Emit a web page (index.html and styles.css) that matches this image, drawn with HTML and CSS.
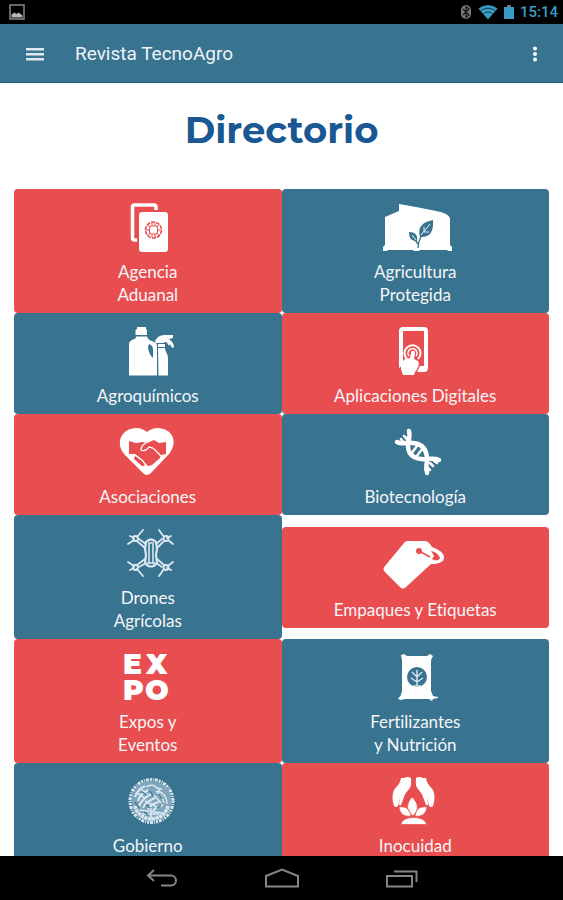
FILE: index.html
```
<!DOCTYPE html>
<html lang="es">
<head>
	<meta charset="UTF-8">
	<title>Revista TecnoAgro</title>
	<meta name="viewport" content="width=device-width,initial-scale=1">
	<link rel="stylesheet" href="styles.css">
</head>
<body>
	<!-- Status bar -->
	<div class="statusbar">
		<svg class="shot" width="16" height="16" viewBox="0 0 16 16">
			<rect x="1" y="1" width="14" height="14" fill="none" stroke="#8a8a8a" stroke-width="1.5"/>
			<path d="M2.500 13.500v-3l3-2 2 1.500 2-1.500 4 3v2z" fill="#b5b5b5"/>
		</svg>
		<div class="status-icons">
			<svg width="12" height="16" viewBox="0 0 12 16">
				<rect x="1" y="1" width="10" height="14" rx="5" fill="#777"/>
				<path d="M3 5l6 6-3 2.500v-11L9 5l-6 6" fill="none" stroke="#161616" stroke-width="1.200"/>
			</svg>
			<svg width="20" height="16" viewBox="0 0 20 16">
				<path d="M0.500 4.500C6 0 14 0 19.500 4.500L10 15.500z" fill="#3a9cc6"/>
				<path d="M3 6.500c4-3 10-3 14 0M5.500 9.500c3-2 6-2 9 0" fill="none" stroke="#123c50" stroke-width="1"/>
			</svg>
			<svg width="10" height="16" viewBox="0 0 10 16">
				<rect x="3" y="1" width="4" height="2" fill="#777"/>
				<rect x="0" y="3" width="10" height="12" fill="#3a9cc6"/>
			</svg>
			<span class="clock">15:14</span>
		</div>
	</div>

	<!-- App bar -->
	<header class="appbar">
		<button class="icon-button" aria-label="Menú">
			<svg width="18" height="14" viewBox="0 0 18 14" fill="#dfeaf0">
				<path d="M0 1h18v2.500H0zM0 6h18v2.500H0zM0 11h18v2.500H0z"/>
			</svg>
		</button>
		<span class="app-title">Revista TecnoAgro</span>
		<button class="icon-button" aria-label="Más opciones">
			<svg width="6" height="16" viewBox="0 0 6 16" fill="#fff">
				<circle cx="3" cy="2.500" r="2"/><circle cx="3" cy="8" r="2"/><circle cx="3" cy="13.500" r="2"/>
			</svg>
		</button>
	</header>

	<!-- Directory -->
	<main class="content">
		<h1>Directorio</h1>
		<nav class="tiles">
			<a class="tile red" href="#agencia">
				<svg class="icon" viewBox="0 0 76 50">
					<path d="M27 37h-2.500a2 2 0 0 1-2-2V4a2 2 0 0 1 2-2H44a2 2 0 0 1 2 2v3" fill="none" stroke="#fff" stroke-width="3.500"/>
					<rect x="29" y="9" width="29" height="40" rx="3" fill="#fff"/>
					<g fill="none" stroke="#e84e4f" stroke-width="1">
						<circle cx="43.500" cy="27" r="8" stroke-width="1.600" stroke-dasharray="4 1"/>
						<rect x="39.500" y="23" width="8" height="8" rx="2"/>
						<path d="M36 27h4M47 27h4M38 22l3 2M49 22l-3 2M38 32l3-2M49 32l-3-2M42 20v3M45 20v3M42 31v3M45 31v3"/>
					</g>
				</svg>
				<span>Agencia<br>Aduanal</span>
			</a>
			<a class="tile blue" href="#agricultura">
				<svg class="icon" viewBox="0 0 76 50">
					<g transform="translate(1 0)">
						<path d="M21 1l17 3 20 4q12 2 14 7v27l2 2v4h-4l-1-1H42l-1 1h-5l-1-1H10l-1 1H5v-4l2-2V14l14-6z" fill="#fff"/>
						<path d="M55 17c1 11-3 18-13 17-3-10 3-15 13-17zM31 29c6 0 9 3 8 9-6 0-8-3-8-9z" fill="#38738f"/>
						<path d="M40 45c0-9 4-14 12-23M40 41l-6-8" fill="none" stroke="#38738f" stroke-width="1.300"/>
						<path d="M43 32l9-11M46 29v-5M46 29h5M34 32l4 5" fill="none" stroke="#fff" stroke-width=".9"/>
					</g>
				</svg>
				<span>Agricultura<br>Protegida</span>
			</a>
			<a class="tile blue" href="#agroquimicos">
				<svg class="icon" viewBox="0 0 76 50">
					<g fill="#fff">
						<path d="M27 0h9v2l1 1v5H25.500V3l1.500-1z"/>
						<path d="M26 9.500h11c1 3 3 4 6 5 3 1 4 2 4 5v29H19v-31c0-3 2-4 4-5 2-.5 3-1 3-3zM39 17c-2 4 0 10 4 14v-8c0-3-1-5-4-6z" fill-rule="evenodd"/>
						<path d="M45 14c2-4 5-6 9-6h9v3l-4 1c3 2 5 5 5 8l-2 1-2-4-1 2c-1-2-2-4-4-4l-2 1h-7z"/>
						<path d="M48 17h7v3h-7zM48 21h7c0 4 3 5 3 10v17.500h-9.500z"/>
					</g>
				</svg>
				<span>Agroquímicos</span>
			</a>
			<a class="tile red" href="#aplicaciones">
				<svg class="icon" viewBox="0 0 76 50">
					<path d="M26 0h21q4 0 4 4v37q0 4-4 4h-7l3-6h4V4H26v34l-4 3V4q0-4 4-4z" fill="#fff"/>
					<g fill="none" stroke="#fff">
						<path d="M30 32a8 8 0 1 1 11 0" stroke-width="2"/>
						<path d="M32 29a4.500 4.500 0 1 1 7 0" stroke-width="1.500"/>
					</g>
					<path d="M34 26c0-3 4-3 4 0l-1 6 4 2c2 2 0 8-3 11l-1 3H26l-2-6v-6l4-4 5-1z" fill="#fff"/>
				</svg>
				<span>Aplicaciones Digitales</span>
			</a>
			<a class="tile red" href="#asociaciones">
				<svg class="icon" viewBox="0 0 76 50">
					<path d="M37 4C44-2 55-1 61 6c5 7 2 15-2 20L41 45q-4 4-8 0L15 27C9 21 8 12 13 6c6-7 17-8 24-2z" fill="#fff"/>
					<path d="M19 13l7 2 6-1 5 1 7-3 5 3 7-1v12l-5 1-1 3-8 7-4 1-8-8-5-4h-6z" fill="#e84e4f"/>
					<path d="M36 15c-4 2-5 4-5 7 4 2 6 0 8-3l4 1 8 8" fill="none" stroke="#fff" stroke-width="1.300"/>
					<path d="M25 27l-2 4 9 8 4-1-3-5z" fill="#e84e4f" stroke="#fff" stroke-width="1.300"/>
				</svg>
				<span>Asociaciones</span>
			</a>
			<a class="tile blue" href="#biotecnologia">
				<svg class="icon" viewBox="0 0 76 50">
					<g fill="none" stroke="#fff" stroke-linecap="round">
						<path d="M32 3c2 6-1 9-1 15 0 11 10 14 19 13 5 0 8-1 12 1" stroke-width="4.500"/>
						<path d="M20 14c5 3 9 0 16 1 12 1 14 10 14 17 0 5-2 8 0 13" stroke-width="4.500"/>
						<path d="M24 11l3 4M27 8l4 4M34 26l6-8M39 29l7-9M53 35l3 3M57 33l3 2M51 40l2 2" stroke-width="2.500"/>
					</g>
				</svg>
				<span>Biotecnología</span>
			</a>
			<a class="tile blue" href="#drones">
				<svg class="icon" viewBox="0 0 76 50">
					<g fill="none" stroke="#dbe8f3" stroke-width="1.800" stroke-linecap="round">
						<path d="M18 15l6-4M27 8l6-7M49 1l5 7M58 11l5 4M18 33l6 4M27 40l6 7M49 47l5-7M58 37l5-4M20 7l4 2M61 7l-4 2M20 41l4-2M61 41l-4-2"/>
						<circle cx="25.500" cy="9.500" r="2.500"/><circle cx="56" cy="9.500" r="2.500"/>
						<circle cx="25.500" cy="38.500" r="2.500"/><circle cx="56" cy="38.500" r="2.500"/>
						<path d="M27 12l8 7M29 10l7 5M54 12l-7 7M52 10l-6 5M27 36l8-6M29 38l7-4M54 36l-7-6M52 38l-6-4"/>
					</g>
					<path d="M36 13q5-5 10 0l1 7-1 6 1 8q-6 7-12 0l1-8-1-6z" fill="#38738f" stroke="#dbe8f3" stroke-width="2.200"/>
					<path d="M39 15v20M43 15v20M37 34h8M38 14h6" fill="none" stroke="#dbe8f3" stroke-width="1.600"/>
				</svg>
				<span>Drones<br>Agrícolas</span>
			</a>
			<a class="tile red" href="#empaques">
				<svg class="icon" viewBox="0 0 76 50">
					<path d="M31 0h17q3 0 5 3l2 3q12 4 12 11c0 4-6 6-13 6L29 46q-3 3-6 0L8 31q-3-3 0-6L27 2q1-2 4-2z" fill="#fff"/>
					<path d="M54 10c5 1 8 4 9 7-1 3-5 3-8 1l2-3z" fill="#e84e4f"/>
					<circle cx="42" cy="10" r="3" fill="#e84e4f"/>
					<path d="M42 10l11 6" stroke="#e84e4f" stroke-width="1.500"/>
				</svg>
				<span>Empaques y Etiquetas</span>
			</a>
			<a class="tile red" href="#expos">
				<svg class="icon expo" viewBox="0 0 76 50">
					<text x="13 36" y="21">EX</text>
					<text x="13 35" y="47">PO</text>
				</svg>
				<span>Expos y<br>Eventos</span>
			</a>
			<a class="tile blue" href="#fertilizantes">
				<svg class="icon" viewBox="0 0 76 50">
					<path d="M24 2l3-1 3 2h20l3-2 3 2-2 4v31l2 5 5 1v1l-5 1-1 2-3-2H28l-4 1-3-1 3-4 1-4V7z" fill="#fff"/>
					<circle cx="40" cy="24" r="10" fill="#38738f"/>
					<path d="M40 33V17M40 29l-6-4M40 29l6-4M40 24l-5-5M40 24l5-5M36 33h8" fill="none" stroke="#dbe8f3" stroke-width="1.400"/>
				</svg>
				<span>Fertilizantes<br>y Nutrición</span>
			</a>
			<a class="tile blue" href="#gobierno">
				<svg class="icon" viewBox="0 0 76 50">
					<circle cx="41.500" cy="24" r="20" fill="#7fa6ba"/>
					<g fill="none" stroke="#dbe8f3">
						<circle cx="41.500" cy="24" r="21.500" stroke-width="3" stroke-dasharray="2 1 1 1 3 1"/>
						<path d="M25 29a17 17 0 0 0 33 0" stroke-width="3.500" stroke-dasharray="3 .8"/>
						<path d="M25 20c2-6 5-9 10-11M28 24c2-6 5-9 10-11M29 29c3-6 6-9 12-12M33 31c2-5 7-8 12-10M38 33c2-5 6-7 11-8M43 34c2-4 6-5 10-6" stroke-width="2"/>
						<path d="M36 10c4-3 9-2 11 1l4 1-3 2c6 2 9 7 9 13M46 14c4 3 7 7 8 12M30 33l22 3M32 37h17M41 31v12M27 16l8 5M31 12l7 6M35 24l12 6M44 18l7 8" stroke-width="1.500"/>
					</g>
					<path d="M25 25l4 6M32 15l5 3M40 14l3 5M49 17l3 5M36 28l4 3M47 31l4-3M34 35l4 3" fill="none" stroke="#38738f" stroke-width="1.300"/>
				</svg>
				<span>Gobierno</span>
			</a>
			<a class="tile red" href="#inocuidad">
				<svg class="icon" viewBox="0 0 76 50">
					<g fill="#fff">
						<path d="M27 1q4-2 7 0c0 5 1 7-2 11-2 3-4 4-5 8l-3 8q-2 1-2-1l1-7-2 9q-2 2-4 0-3-9 0-16c3-4 6-6 7-12z"/>
						<path d="M46 1q-4-2-7 0c0 5-1 7 2 11 2 3 4 4 5 8l3 8q2 1 2-1l-1-7 2 9q2 2 4 0 3-9 0-16c-3-4-6-6-7-12z"/>
						<path d="M35 20c7 7 7 13 1 19-7-6-7-12-1-19zM22 30c7-1 11 2 12 9-7 1-11-2-12-9zM50 30c-7-1-11 2-12 9 7 1 11-2 12-9zM24 47.500c1-5 6-7 12.500-7s12 2 13 7z" stroke="#e84e4f" stroke-width=".7"/>
					</g>
				</svg>
				<span>Inocuidad</span>
			</a>
		</nav>
	</main>

	<!-- System navigation -->
	<footer class="sysnav">
		<button class="icon-button" aria-label="Atrás">
			<svg width="34" height="20" viewBox="0 0 34 20">
				<path d="M9 2L3 7.500 9 13M3 7.500h23a5 5 0 0 1 0 10H16"/>
			</svg>
		</button>
		<button class="icon-button" aria-label="Inicio">
			<svg width="34" height="20" viewBox="0 0 34 20">
				<path d="M1 18.500V8l16-6.500L33 8v10.500z"/>
			</svg>
		</button>
		<button class="icon-button" aria-label="Recientes">
			<svg width="34" height="20" viewBox="0 0 34 20">
				<path d="M2 8h25v10.500H2zM9 3.500h22.500V14"/>
			</svg>
		</button>
	</footer>
</body>
</html>
```

FILE: styles.css
```
body {
	margin: 0;
	height: 100vh;
	display: flex;
	flex-direction: column;
	background: #fff;
	font-family: Lato, "Liberation Sans", sans-serif;
}

svg {
	display: block;
}

.icon-button {
	display: flex;
	align-items: center;
	justify-content: center;
	width: 40px;
	height: 40px;
	padding: 0;
	border: 0;
	background: transparent;
	cursor: pointer;
}

/* status bar */
.statusbar {
	flex: none;
	display: flex;
	align-items: center;
	justify-content: space-between;
	height: 24px;
	padding: 0 5px 0 9px;
	background: #000;
}
.status-icons {
	display: flex;
	align-items: center;
	gap: 6px;
}
.clock {
	color: #3a9cc6;
	font: 500 15px/24px Roboto, sans-serif;
}

/* app bar */
.appbar {
	flex: none;
	display: flex;
	align-items: center;
	height: 59px;
	padding: 2px 8px 0 15px;
	box-sizing: border-box;
	background: #38738f;
	border-bottom: 1px solid #1b5f80;
}
.app-title {
	flex: 1;
	margin-left: 20px;
	color: #edf4f8;
	font: 19px/24px Roboto, sans-serif;
}

/* directory */
.content {
	flex: 1;
	min-height: 0;
	overflow: hidden;
	padding: 24px 14px 0;
}
h1 {
	margin: 0 0 36px;
	text-align: center;
	color: #195892;
	font: bold 37px/46px Montserrat, Inter, sans-serif;
}
.tiles {
	display: grid;
	grid-template-columns: 1fr 1fr;
	align-items: center;
}
.tile {
	display: flex;
	flex-direction: column;
	align-items: center;
	gap: 7px;
	padding: 14px 8px 7px;
	border-radius: 4px;
	color: #f6f6f8;
	font-size: 17px;
	line-height: 23px;
	font-variant-ligatures: none;
	text-align: center;
	text-decoration: none;
}
.red {
	background: #e84e4f;
}
.blue {
	background: #38738f;
}
.icon {
	width: 76px;
	height: 50px;
}
.expo {
	overflow: visible;
}
.expo text {
	fill: #fff;
	font: 900 28px Montserrat, Inter, sans-serif;
}

/* system navigation */
.sysnav {
	flex: none;
	display: flex;
	align-items: center;
	justify-content: center;
	gap: 80px;
	height: 44px;
	background: #000;
}
.sysnav svg {
	fill: none;
	stroke: #858585;
	stroke-width: 2;
}
```
